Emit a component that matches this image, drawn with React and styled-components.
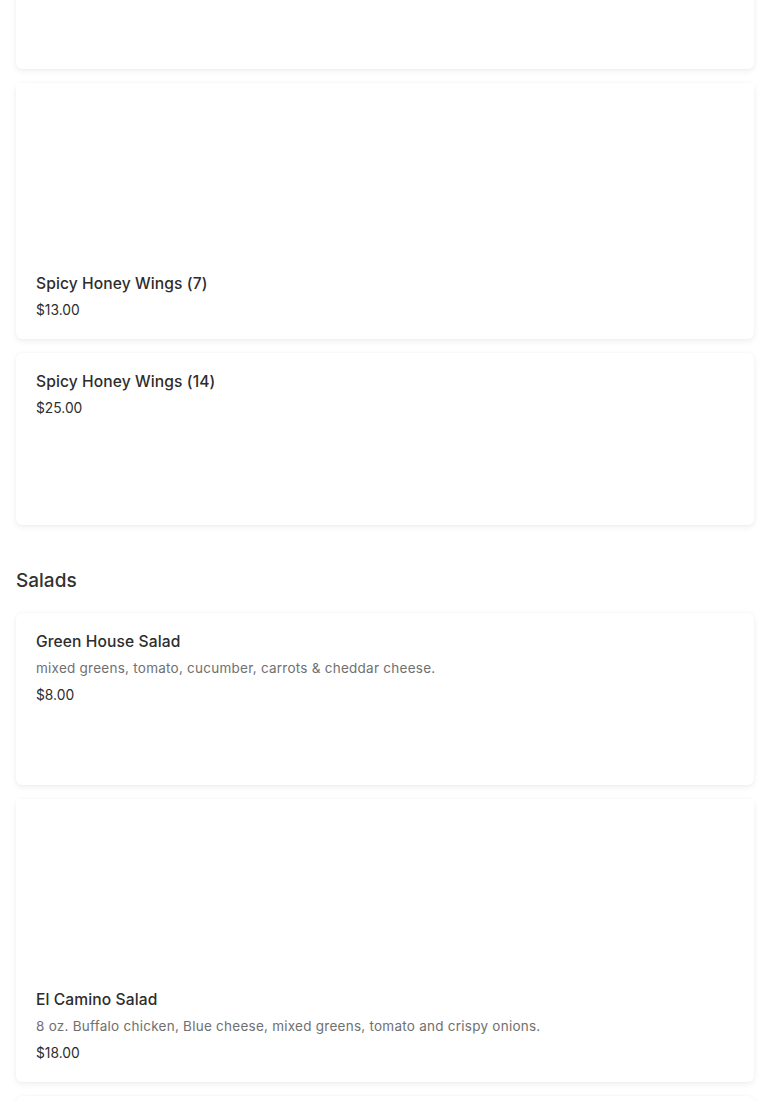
import React from 'react';
import styled, { createGlobalStyle } from 'styled-components';

const GlobalStyle = createGlobalStyle`
  body {
    margin: 0;
    background: #fff;
    font-family: Inter, "Liberation Sans", Arial, sans-serif;
    color: #2d2d2d;
    overflow: hidden;
  }
`

const Page = styled.main`
  padding: 0 16px;
  display: flex;
  flex-direction: column;
  gap: 14px;
`

const Section = styled.section`
  display: flex;
  flex-direction: column;
  gap: 14px;
`

const SectionTitle = styled.h2`
  margin: 28px 0 4px;
  font-size: 19px;
  line-height: 28px;
  font-weight: 500;
  color: #333;
`

const Card = styled.article`
  background: #fff;
  border-radius: 6px;
  box-shadow: 0 2px 6px rgba(0, 0, 0, 0.07), 0 0 2px rgba(0, 0, 0, 0.04);
  min-height: 172px;
  display: flex;
  flex-direction: column;
  margin-top: ${({ offset }) => offset || 0}px;
`

const Photo = styled.div`
  height: 172px;
  background: #fff;
`

const Body = styled.div`
  padding: 17px 20px 19px;
`

const Name = styled.h3`
  margin: 0;
  font-size: 15.6px;
  line-height: 24px;
  font-weight: 500;
  color: #2d2d2d;
  letter-spacing: 0.1px;
`

const Desc = styled.p`
  margin: 4px 0 7px;
  font-size: 13.5px;
  line-height: 20px;
  color: #707070;
  letter-spacing: 0.25px;
`

const Price = styled.p`
  margin: 4px 0 0;
  font-size: 13.8px;
  line-height: 20px;
  color: #2d2d2d;
`

function MenuItem({ name, desc, price, photo, offset }) {
  return (
    <Card offset={offset}>
      {photo && <Photo />}
      {name && (
        <Body>
          <Name>{name}</Name>
          {desc && <Desc>{desc}</Desc>}
          <Price>{price}</Price>
        </Body>
      )}
    </Card>
  )
}

export default function App() {
  return (
    <>
      <GlobalStyle />
      <Page>
        <Section>
          <MenuItem offset={-103} />
          <MenuItem photo name="Spicy Honey Wings (7)" price="$13.00" />
          <MenuItem name="Spicy Honey Wings (14)" price="$25.00" />
        </Section>
        <Section>
          <SectionTitle>Salads</SectionTitle>
          <MenuItem
            name="Green House Salad"
            desc="mixed greens, tomato, cucumber, carrots & cheddar cheese."
            price="$8.00"
          />
          <MenuItem
            photo
            name="El Camino Salad"
            desc="8 oz. Buffalo chicken, Blue cheese, mixed greens, tomato and crispy onions."
            price="$18.00"
          />
          <MenuItem />
        </Section>
      </Page>
    </>
  )
}
